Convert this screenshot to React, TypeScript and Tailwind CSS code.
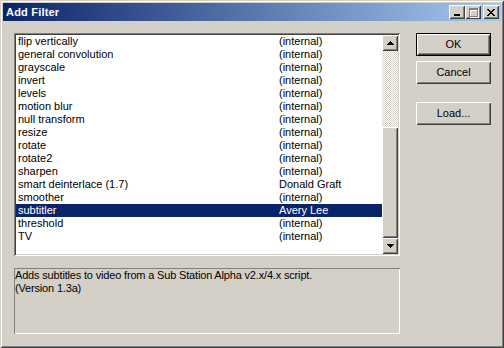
const filters: [string, string][] = [
  ["flip vertically", "(internal)"],
  ["general convolution", "(internal)"],
  ["grayscale", "(internal)"],
  ["invert", "(internal)"],
  ["levels", "(internal)"],
  ["motion blur", "(internal)"],
  ["null transform", "(internal)"],
  ["resize", "(internal)"],
  ["rotate", "(internal)"],
  ["rotate2", "(internal)"],
  ["sharpen", "(internal)"],
  ["smart deinterlace (1.7)", "Donald Graft"],
  ["smoother", "(internal)"],
  ["subtitler", "Avery Lee"],
  ["threshold", "(internal)"],
  ["TV", "(internal)"],
];

const raised =
  "shadow-[inset_1px_1px_0_#fff,inset_-1px_-1px_0_#404040,inset_2px_2px_0_#d4d0c8,inset_-2px_-2px_0_#808080]";

function Arrow({ up }: { up?: boolean }) {
  return (
    <div className={`flex h-[16px] w-[16px] items-center justify-center bg-[#d4d0c8] ${raised}`}>
      <svg width="7" height="4" viewBox="0 0 7 4" className={up ? "" : "rotate-180"}>
        <path d="M3 0h1v1h1v1h1v1h1v1H0V3h1V2h1V1h1z" fill="#000" />
      </svg>
    </div>
  );
}

function CaptionButton({ children }: { children: React.ReactNode }) {
  return (
    <div className={`flex h-[14px] w-[16px] items-center justify-center bg-[#d4d0c8] ${raised}`}>
      {children}
    </div>
  );
}

function Button({ label, isDefault }: { label: string; isDefault?: boolean }) {
  return (
    <div
      className={`flex h-[23px] w-[75px] items-center justify-center bg-[#d4d0c8] text-[11px] text-black ${
        isDefault
          ? "shadow-[inset_0_0_0_1px_#000,inset_2px_2px_0_#fff,inset_-2px_-2px_0_#404040,inset_3px_3px_0_#d4d0c8,inset_-3px_-3px_0_#808080]"
          : raised
      }`}
    >
      {label}
    </div>
  );
}

export default function App() {
  return (
    <div className="h-[348px] w-[504px] bg-[#d4d0c8] p-[3px] font-['Liberation_Sans',Arial,sans-serif] shadow-[inset_1px_1px_0_#d4d0c8,inset_-1px_-1px_0_#404040,inset_2px_2px_0_#fff,inset_-2px_-2px_0_#808080]">
      {/* caption */}
      <div className="flex h-[18px] items-center bg-[linear-gradient(to_right,#0a246a,#a6caf0)] pr-[2px] pl-[3px]">
        <span className="text-[11px] font-bold tracking-[0.2px] text-white">Add Filter</span>
        <div className="ml-auto flex items-center">
          <CaptionButton>
            <div className="mt-[6px] ml-[-1px] h-[2px] w-[6px] bg-black" />
          </CaptionButton>
          <CaptionButton>
            <div className="relative h-[9px] w-[9px]">
              <div className="absolute top-[1px] left-[1px] h-[9px] w-[9px] border border-t-2 border-white" />
              <div className="absolute inset-0 border border-t-2 border-[#808080]" />
            </div>
          </CaptionButton>
          <div className="ml-[2px]">
            <CaptionButton>
              <svg width="8" height="7" viewBox="0 0 8 7">
                <path d="M0 0h2v1h1v1h2V1h1V0h2v1H7v1H6v1H5v1h1v1h1v1h1v1H6V6H5V5H3v1H2v1H0V6h1V5h1V4h1V3H2V2H1V1H0z" fill="#000" />
              </svg>
            </CaptionButton>
          </div>
        </div>
      </div>

      {/* body */}
      <div className="flex pt-[12px] pl-[11px]">
        <div className="flex w-[386px] flex-col">
          <div className="flex h-[223px] bg-white p-[2px] shadow-[inset_1px_1px_0_#808080,inset_-1px_-1px_0_#fff,inset_2px_2px_0_#404040,inset_-2px_-2px_0_#d4d0c8]">
            <div className="flex-1 overflow-hidden">
              {filters.map(([name, author]) => {
                const selected = name === "subtitler";
                return (
                  <div
                    key={name}
                    className={`flex h-[13px] items-center pl-[2px] text-[11px] leading-[13px] ${
                      selected ? "bg-[#0a246a] text-white" : "text-black"
                    }`}
                  >
                    <span className="w-[261px] whitespace-nowrap">{name}</span>
                    <span className="whitespace-nowrap">{author}</span>
                  </div>
                );
              })}
            </div>
            <div className="flex w-[16px] flex-col">
              <Arrow up />
              <div className="h-[76px] bg-[repeating-conic-gradient(#d4d0c8_0_25%,#fff_0_50%)] bg-[length:2px_2px]" />
              <div className={`h-[111px] bg-[#d4d0c8] ${raised}`} />
              <Arrow />
            </div>
          </div>

          <div className="mt-[12px] h-[66px] px-[1px] pt-[1px] text-[11px] leading-[13px] tracking-[-0.17px] text-black shadow-[inset_1px_1px_0_#808080,inset_-1px_-1px_0_#fff]">
            <p>Adds subtitles to video from a Sub Station Alpha v2.x/4.x script.</p>
            <p>(Version 1.3a)</p>
          </div>
        </div>

        <div className="ml-[16px] flex flex-col">
          <Button label="OK" isDefault />
          <div className="mt-[5px]">
            <Button label="Cancel" />
          </div>
          <div className="mt-[18px]">
            <Button label="Load..." />
          </div>
        </div>
      </div>
    </div>
  );
}
